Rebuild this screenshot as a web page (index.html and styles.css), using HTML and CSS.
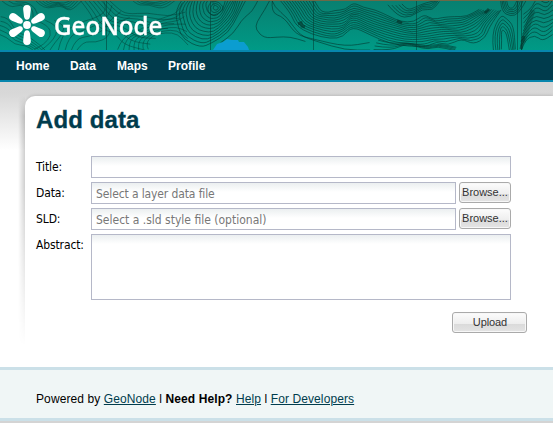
FILE: index.html
```html
<!DOCTYPE html>
<html lang="en">
<head>
<meta charset="utf-8">
<title>Add data - GeoNode</title>
<link rel="stylesheet" href="styles.css">
</head>
<body>
<header class="banner">
  <svg class="terrain" width="553" height="50" viewBox="0 0 553 50" aria-hidden="true">
    <defs><linearGradient id="land" x1="0" y1="0" x2="0" y2="1"><stop offset="0" stop-color="#087f70"/><stop offset="1" stop-color="#009a86"/></linearGradient></defs>
    <rect width="553" height="50" fill="url(#land)"/>
    <g id="contours" fill="none" stroke="#03382f" stroke-width=".9"></g>
    <path d="M213 50l4-6 6-2 4-3 5 1 6 0 1 2 5 0 4 5 1 3z" fill="#0b9dd0"/>
    <path d="M106.500 0V50M210.500 0V50M313.500 0V50M416.500 0V50M517.500 0V50M521.500 0V50" stroke="#043c34" stroke-width=".8" opacity=".7"/>
    <path d="M298 24l3-1 1 3 3 1M521 49l3-13M485 13l4-4M397 21l5 2" stroke="#052e27" stroke-width="3" opacity=".6" fill="none"/>
    <path d="M523 42l10-32" stroke="#052e27" stroke-width="5" opacity=".3"/>
    <path d="M0 .5H553" stroke="#6b6947"/>
  </svg>
  <div class="logo">
    <svg width="40" height="42" viewBox="0 0 40 42" fill="#fff" aria-hidden="true">
      <defs><path id="petal" d="M20 15.800C18 15.800 17.400 14.400 17 12.500L16.200 5.800C15.800 2.600 17.300 1 20 1s4.200 1.600 3.800 4.800L23 12.500C22.600 14.400 22 15.800 20 15.800z"/></defs>
      <circle cx="20" cy="21" r="3.900"/>
      <use href="#petal"/><use href="#petal" transform="rotate(60 20 21)"/><use href="#petal" transform="rotate(120 20 21)"/><use href="#petal" transform="rotate(180 20 21)"/><use href="#petal" transform="rotate(240 20 21)"/><use href="#petal" transform="rotate(300 20 21)"/>
    </svg>
    <span class="wordmark">GeoNode</span>
  </div>
</header>
<nav class="nav"><a class="n1">Home</a><a class="n2">Data</a><a class="n3">Maps</a><a class="n4">Profile</a></nav>
<main class="page">
  <div class="edge"></div>
  <section class="panel">
    <h1><span>Add data</span></h1>
    <form class="form">
      <label>Title:</label><div class="box"></div>
      <label>Data:</label><div class="row"><div class="box"><span>Select a layer data file</span></div><button type="button">Browse...</button></div>
      <label>SLD:</label><div class="row"><div class="box"><span class="optional">Select a .sld style file (optional)</span></div><button type="button">Browse...</button></div>
      <label>Abstract:</label><div class="box area"></div>
    </form>
    <div class="actions"><button type="button" class="upload">Upload</button></div>
  </section>
</main>
<footer class="footer"><p>Powered by <a>GeoNode</a> l <b>Need Help?</b> <a>Help</a> l <a>For Developers</a></p></footer>
<script src="contours.js"></script>
</body>
</html>
```
FILE: styles.css
```css
* { box-sizing: border-box; }
body { margin: 0; width: 553px; height: 423px; overflow: hidden; background: #d4d4d4; color: #000; font: 12px "Liberation Sans", Arial, sans-serif; }
.banner { height: 52px; border-bottom: 2px solid #0786ad; position: relative; overflow: hidden; }
.terrain { display: block; }
.logo { position: absolute; left: 7px; top: 4px; display: flex; }
.wordmark { color: #fff; font: 500 25px/42px "Noto Sans", sans-serif; -webkit-text-stroke: .35px #fff; margin-left: 7px; transform: scaleX(.965); transform-origin: left; }
.nav { height: 30px; background: #003c4d; border-bottom: 2px solid #0786ad; display: flex; padding-left: 16px; color: #fff; font-weight: bold; line-height: 28px; }
.nav a { flex: none; }
.n1 { width: 54px; }
.n2 { width: 47px; }
.n3 { width: 51px; }
.page { height: 285px; padding-top: 14px; display: flex; background: linear-gradient(#d6d6d6, #d8d8d8 12px, #fff 68px); }
.edge { width: 7px; margin-left: 18px; background: linear-gradient(to right, #0000, #00000030); -webkit-mask-image: linear-gradient(transparent, #000 20px, #000 90px, transparent 250px); mask-image: linear-gradient(transparent, #000 20px, #000 90px, transparent 250px); }
.panel { flex: 1; height: 271px; background: #fff; border-top-left-radius: 10px; padding: 8px 0 0 11px; box-shadow: 0 -1px 3px #0002; clip-path: inset(-6px 0 0 0 round 10px 0 0 0); }
h1 { margin: 0; height: 52px; color: #003c4d; font: bold 24px/31px "Liberation Sans", Arial, sans-serif; -webkit-text-stroke: .3px #003c4d; letter-spacing: .1px; }
.form { display: grid; grid-template-columns: 55px 420px; grid-template-rows: 22px 22px 22px 66px; row-gap: 4px; font: 12px/22px "DejaVu Sans Condensed", "DejaVu Sans", sans-serif; letter-spacing: -.12px; }
label { white-space: nowrap; }
.row { display: grid; grid-template-columns: 365px 52px; column-gap: 3px; }
.box { height: 22px; border: 1px solid #b5b8c8; background: linear-gradient(#ebeff0, #fff 9px); color: #777; padding-left: 4px; line-height: 22px; white-space: nowrap; }
.optional { letter-spacing: 0; }
.area { height: 66px; }
button { height: 21px; padding: 0; border: 1px solid #aaa; border-radius: 3px; background: linear-gradient(#fcfcfc, #eee 56%, #dadada 57%, #e4e4e4); box-shadow: inset 0 0 0 1px #f7f7f7; color: #333; font: 11px/17px "Liberation Sans", Arial, sans-serif; letter-spacing: 0; white-space: nowrap; }
.actions { width: 491px; padding-top: 12px; display: flex; justify-content: flex-end; }
.upload { width: 75px; letter-spacing: -.1px; padding-left: 1px; }
.footer { height: 54px; background: #f0f6f6; border-top: 3px solid #cbe0e8; border-bottom: 3px solid #cbe0e8; padding: 22px 0 0 36px; }
.footer p { margin: 0; line-height: 14px; letter-spacing: .1px; white-space: nowrap; }
.footer a { color: #003c4d; text-decoration: underline; text-underline-offset: 1px; }
```
FILE: contours.js
```js
// Each family holds two boundary lines; intermediate contours are interpolated.
const families = [
  [10, [182,0,175,10,178,28,184,40,200,47,212,44,228,32,239,15,245,0], [207,0,206,4,206,8,208,12,210,14,214,16,218,15,223,8,226,0]],
  [3, [211,1,207,8,210,15,218,15,224,8,219,2,211,1], [214,5,213,8,214,10,217,10,219,8,217,6,214,5]],
  [1, [269,0,265,11,256,22,256,30,264,38,277,37,290,37,305,41], []],
  [1, [258,0,253,10,248,15,241,20,234,34,220,42], []],
  [2, [273,0,270,12,285,18,295,34,315,40,345,46,370,43], [272,0,274,7,288,18,299,35,318,42,345,50,370,50]],
  [13, [280,0,290,12,296,26,311,34,331,39,343,37,352,26,370,35,389,43,410,47,427,46,437,42,447,45,462,39,473,44,486,38,489,27,501,10], [314,0,318,7,322,12,328,12,335,11,345,9,354,3,363,7,375,10,389,16,401,22,414,22,424,14,433,20,442,17,455,17,466,16,480,10,497,0]],
  [5, [388,5,398,17,411,17,423,9,432,10,440,2], [402,4,407,10,415,8,423,3,429,3,434,0]],
  [5, [493,50,492,34,500,14,507,19,513,25,516,50], [502,50,501,39,502,30,505,31,508,39,509,50]],
  [5, [500,0,502,12,510,16,519,14,526,0], [507,0,507,6,511,9,514,7,517,0]],
  [10, [521,50,525,40,535,35,542,41,553,35], [524,15,531,8,537,-2,546,4,553,-3]],
  [4, [374,50,391,50,407,44,426,49,438,47,454,50], [378,40,391,44,407,42,427,47,438,43,457,48]],
  [8, [80,0,90,12,96,27,115,33,124,45,145,50], [109,0,117,8,128,15,147,12,168,17,185,12]],
  [7, [118,50,122,37,139,31,155,20,176,14,183,3], [149,50,145,43,153,36,165,32,178,34,188,45]],
  [4, [58,50,62,35,77,22,93,20,106,11,104,0], [77,50,83,41,96,43,108,37,112,25,129,17]],
  [5, [0,16,9,18,15,31,33,39,45,50], [0,35,7,37,15,45,25,45,33,50]],
  [5, [35,0,44,10,61,5,70,12,83,0], [48,0,52,3,58,2,64,4,70,0]],
  [3, [37,21,48,25,52,36,43,44,35,50], [55,21,64,24,63,34,55,42,50,50]],
  [4, [132,0,137,5,149,5,162,9,177,0], [142,0,147,2,153,2,158,3,163,0]],
  [3, [2,1,10,8,21,4,31,11,27,22], [14,0,18,3,25,1,36,8,38,18]]
];
const group = document.getElementById("contours");
families.forEach(([count, a, b], f) => {
  for (let i = 0; i < count; i++) {
    const t = count === 1 ? 0 : i / (count - 1);
    const p = [];
    for (let k = 0; k < a.length; k += 2) {
      const w = Math.sin(i * 0.9 + k * 1.7 + f) * 0.7;
      const bx = b.length ? b[k] : a[k];
      const by = b.length ? b[k + 1] : a[k + 1];
      p.push([a[k] + (bx - a[k]) * t + w, a[k + 1] + (by - a[k + 1]) * t + w]);
    }
    let d = `M${p[0]}`;
    for (let k = 1; k < p.length - 1; k++) {
      d += `Q${p[k]} ${(p[k][0] + p[k + 1][0]) / 2},${(p[k][1] + p[k + 1][1]) / 2}`;
    }
    d += `L${p[p.length - 1]}`;
    const path = document.createElementNS("http://www.w3.org/2000/svg", "path");
    path.setAttribute("d", d);
    path.setAttribute("opacity", f > 10 ? 0.5 : 0.68);
    group.appendChild(path);
  }
});
```
